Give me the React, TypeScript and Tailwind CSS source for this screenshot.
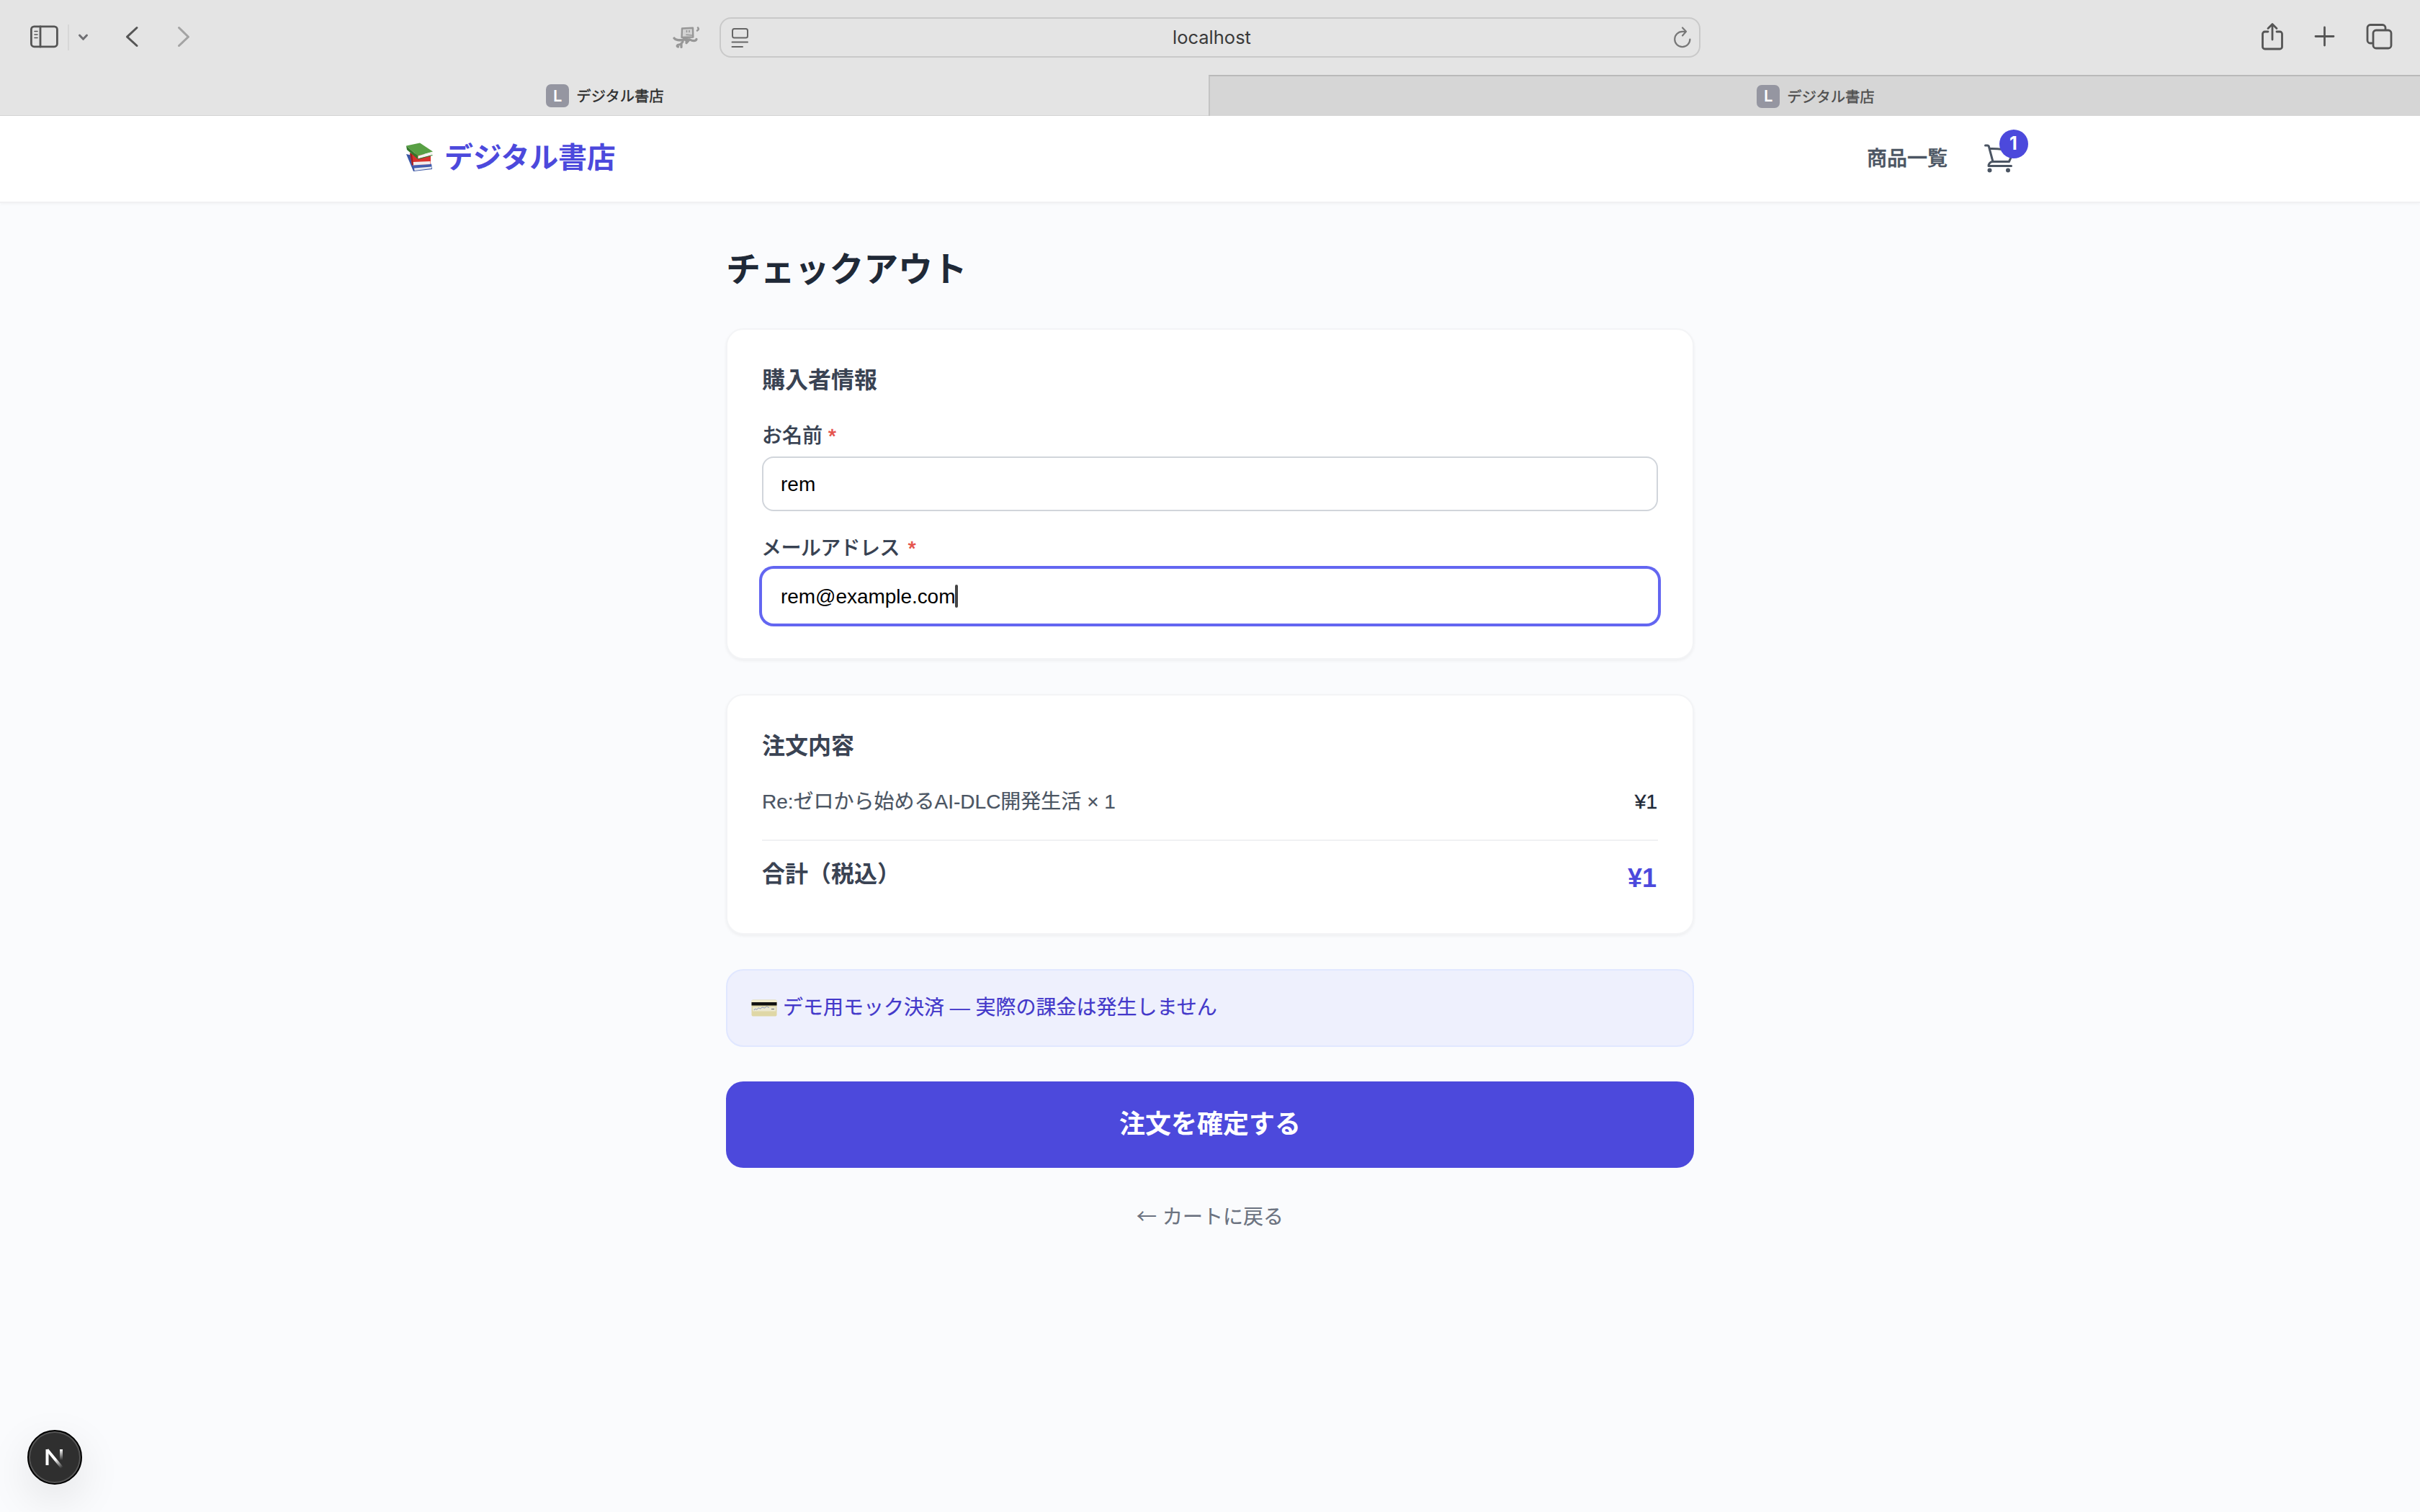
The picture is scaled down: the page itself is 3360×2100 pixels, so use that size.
import React from "react";

const JP = "font-['Liberation_Sans','Noto_Sans_CJK_JP',sans-serif]";

function Chrome() {
  return (
    <div className="flex h-[161px] flex-col bg-[#e4e4e4]">
      <div className="flex h-[104px] items-start">
        <div className="flex w-[999px] shrink-0 justify-between">
          <svg className="h-[104px] w-[280px] shrink-0" viewBox="0 0 280 104" fill="none" strokeLinecap="round" strokeLinejoin="round">
            <g stroke="#555" strokeWidth="2.8">
              <rect x="43.4" y="36.8" width="36" height="28" rx="4" />
              <path d="M56 37v28" />
              <path d="M48 43.5h4M48 48h4M48 52.5h4" strokeWidth="1.6" />
              <path d="M190 38.500l-13.500 12.700 13.500 12.300" strokeWidth="3" />
            </g>
            <path d="M95 34v36" stroke="#d3d3d3" strokeWidth="1.6" strokeLinecap="butt" />
            <path d="M110.500 49l5 5.300 5-5.300" stroke="#707074" strokeWidth="3" />
            <path d="M248.500 38.500l13 12.700-13 12.300" stroke="#a3a3a3" strokeWidth="3" />
          </svg>
          <svg className="mt-[34px] mr-[25px] h-[36px] w-[40px] shrink-0" viewBox="0 0 40 36" fill="none" stroke="#979797" strokeLinecap="round" strokeLinejoin="round">
            <path d="M13 5.500l15-.8.300 12.800-15.800.500z" fill="#d2d2d2" strokeWidth="2.400" />
            <path d="M19.500 8.500v2M23 8.500v2M19 14.300l8 .7" strokeWidth="1.600" />
            <path d="M2 19c2.500 3.500 7 3 13 2.500M24 21c3 2 8 2.500 9-.5" strokeWidth="3.200" />
            <path d="M15 20.500l8 .5-4 4.500" strokeWidth="3.400" fill="#979797" />
            <path d="M14 24l-3 3.500-4 1c-1.500 1-1 2 .5 2.500M12 27v4.500" strokeWidth="3.200" />
            <path d="M35 4.500c1.200 1.500 1.200 2.500-1 4" strokeWidth="2.600" />
          </svg>
        </div>
        <div className="mt-6 flex h-14 w-[1362px] shrink-0 items-center rounded-[16px] border-2 border-[#c9c9c9] pr-[9px] pl-[14px]">
          <svg className="h-8 w-7 shrink-0" viewBox="0 0 28 32" fill="none" stroke="#666" strokeWidth="2" strokeLinecap="round">
            <rect x="2" y="4" width="21" height="12.500" rx="2.500" />
            <path d="M1.500 22.500h21.500M1.500 29h14.500" />
          </svg>
          <div className="flex-1 text-center font-['Inter'] text-[25.500px] text-[#3a3a3a]">localhost</div>
          <svg className="h-8 w-7 shrink-0" viewBox="0 0 28 32" fill="none" stroke="#777" strokeWidth="2.200" strokeLinecap="round" strokeLinejoin="round">
            <path d="M24.400 18.500a10.600 10.600 0 1 1-10.600-10.600h4.500" />
            <path d="M14 2.500l5 5.300-5 5.600" />
          </svg>
        </div>
        <div className="flex-1" />
        <svg className="h-[104px] w-[226px] shrink-0" viewBox="3134 0 226 104" fill="none" stroke="#555" strokeWidth="2.800" strokeLinecap="round" strokeLinejoin="round">
          <path d="M3149 44h-4.500a3 3 0 0 0-3 3v18a3 3 0 0 0 3 3h21a3 3 0 0 0 3-3V47a3 3 0 0 0-3-3h-4.500M3155 55V34M3149 39.500l6-6 6 6" />
          <path d="M3215 50.500h25M3227.500 38v25" />
          <path d="M3293 60h-2a4 4 0 0 1-4-4V38.500a4 4 0 0 1 4-4h17a4 4 0 0 1 4 4v2" />
          <rect x="3295" y="42" width="25" height="25" rx="4" />
        </svg>
      </div>
      <div className="flex h-[57px]">
        <Tab active />
        <Tab />
      </div>
    </div>
  );
}

function Tab({ active = false }: { active?: boolean }) {
  return (
    <div
      className={
        active
          ? "flex w-[1678px] items-center justify-center gap-[10px] border-b border-[#d4d4d4] pt-[2px] pl-[2px] text-[#2b2b2b]"
          : "flex flex-1 items-center justify-center gap-[10px] border-t-2 border-l-2 border-t-[#b9b9b9] border-l-[#c4c4c4] bg-[#d6d6d6] pl-[2px] text-[#4d4d4d]"
      }
    >
      <span className="flex size-8 items-center justify-center rounded-[7px] bg-[#9596a1] font-['Inter'] text-[22px] font-semibold text-white">L</span>
      <span className={`${JP} pt-[2px] text-[20.300px] leading-[30px] [-webkit-text-stroke:0.4px]`}>デジタル書店</span>
    </div>
  );
}

function Books() {
  return (
    <svg className="h-[42px] w-[40px] shrink-0" viewBox="0 0 40 42">
      <path d="M1 16l10 24 26-3-1-7-26-12z" fill="#3b56a5" />
      <path d="M12 35.500l24-2v2.500l-23.500 3z" fill="#e6e9f0" />
      <path d="M9 31.500l26-2.500 1.500 2.500-25 3z" fill="#4562b5" />
      <path d="M6 15l3 16.500 26-1.500v-13z" fill="#d8322c" />
      <path d="M10.500 27l24-1v4l-24 1.500z" fill="#f1eeee" />
      <path d="M6 14l3.500 17.500 1.500-.5-2-15z" fill="#9d1d1f" />
      <path d="M1 4.500L20 .5l18 12-21 6z" fill="#58a044" />
      <path d="M1 4.500l16 14v4.500L2 10z" fill="#34772b" />
      <path d="M17.500 18.500l20-5.500-.5 4.500-19.500 5z" fill="#f3f3ef" />
      <path d="M17 22.500l20.500-5.500v1l-20 5.500z" fill="#34772b" />
    </svg>
  );
}

function CardIcon() {
  return (
    <svg className="h-[24px] w-[36px] shrink-0" viewBox="0 0 36 24">
      <rect x=".5" y=".5" width="35" height="23" rx="2" fill="#dfd7a6" />
      <rect x=".5" y="1" width="35" height="3.500" fill="#f0ebcb" />
      <rect x=".5" y="4" width="35" height="4.500" fill="#111" />
      <rect x="2" y="10.500" width="32" height="6" fill="#ebe8d0" />
      <path d="M4 15c2-4 3 1 5-2s3 2 5-1 4 2 6-1 3 1 5 0" stroke="#8290bd" strokeWidth="1" fill="none" />
      <path d="M28 13.500h4" stroke="#777" strokeWidth="1.200" />
    </svg>
  );
}

function Header() {
  return (
    <header className="flex h-[121px] items-center justify-between border-b-2 border-[#f1f1f3] bg-white px-[560px] shadow-[0_2px_4px_rgba(0,0,0,0.03)]">
      <div className="flex items-center gap-[14px] pl-[3px] text-[40px] leading-[56px] font-bold text-[#4c49dc]">
        <span className="pb-[3px]"><Books /></span>
        <span className="pb-[3px] tracking-[-0.3px]">デジタル書店</span>
      </div>
      <nav className="flex items-center gap-[48px]">
        <span className="text-[28px] font-medium text-[#4b5563] [-webkit-text-stroke:0.5px]">商品一覧</span>
        <div className="relative h-12 w-12">
          <svg className="absolute top-[-1px] left-0 size-[48px]" viewBox="0 0 24 24" fill="none" stroke="#4b5563" strokeWidth="1.500" strokeLinecap="round" strokeLinejoin="round">
            <path d="M2.250 3h1.386c.51 0 .955.343 1.087.835l.383 1.437M7.500 14.250a3 3 0 0 0-3 3h15.750m-12.750-3h11.218c1.121-2.300 2.100-4.684 2.924-7.138a60.114 60.114 0 0 0-16.536-1.840M7.500 14.250 5.106 5.272M6 20.250a.75.75 0 1 1-1.500 0 .75.75 0 0 1 1.500 0Zm12.750 0a.75.75 0 1 1-1.500 0 .75.75 0 0 1 1.500 0Z" />
          </svg>
          <span className="absolute -top-[17px] left-[24px] flex size-10 items-center justify-center rounded-full bg-[#4c49dc] pr-px font-['Inter'] text-[25px] font-bold text-white">1</span>
        </div>
      </nav>
    </header>
  );
}

function Panel({ className, children }: { className: string; children: React.ReactNode }) {
  return (
    <section className={`rounded-[24px] border-2 border-[#f3f4f6] bg-white px-12 shadow-[0_2px_4px_rgba(0,0,0,0.05)] ${className}`}>
      {children}
    </section>
  );
}

function Label({ children }: { children: React.ReactNode }) {
  return (
    <div className="flex h-[40px] items-center text-[28px] leading-[40px] font-medium text-[#374151]">
      <span className="[-webkit-text-stroke:0.200px]">{children}</span>
      <span className="text-[#e5534b] [-webkit-text-stroke:0.700px]">*</span>
    </div>
  );
}

export default function App() {
  return (
    <div className={`flex h-[2100px] w-[3360px] flex-col overflow-hidden bg-[#fafbfd] ${JP}`}>
      <Chrome />
      <Header />
      <main className="mx-auto w-[1344px] flex-1 pt-[61px]">
        <h1 className="h-[64px] text-[48px] leading-[64px] font-bold tracking-[-0.2px] text-[#1f2937]">チェックアウト</h1>
        <Panel className="mt-[49px] h-[460px] pt-[46px]">
          <h2 className="text-[32px] leading-[48px] font-bold text-[#3a4353]">購入者情報</h2>
          <div className="mt-[34px]">
            <Label><span className="mr-[8px]">お名前</span></Label>
          </div>
          <div className="mt-[8px] flex h-[76px] items-center rounded-[16px] border-2 border-[#d1d5db] px-[24px] text-[28px] text-black"><span className="pt-[2px]">rem</span></div>
          <div className="mt-[32px]">
            <Label><span className="mr-[12px] -ml-px tracking-[-0.600px]">メールアドレス</span></Label>
          </div>
          <div className="mt-[8px] flex h-[76px] items-center rounded-[16px] border-2 border-transparent px-[24px] text-[28px] text-black ring-4 ring-[#6366f1]">
            <span className="pt-[2px] tracking-[-0.050px]">rem@example.com</span>
            <span className="h-8 w-[4px] rounded-full bg-[#444]" />
          </div>
        </Panel>
        <Panel className="mt-[48px] h-[334px] pt-[46px]">
          <h2 className="text-[32px] leading-[48px] font-bold text-[#3a4353]">注文内容</h2>
          <div className="mt-[34px] flex h-[40px] items-center justify-between text-[28px]">
            <span className="text-[#4b5563] [-webkit-text-stroke:0.200px]">Re:ゼロから始めるAI-DLC開発生活 × 1</span>
            <span className="pr-[1px] font-medium text-[#1f2937] [-webkit-text-stroke:0.4px]">¥1</span>
          </div>
          <div className="mt-[32px] flex justify-between border-t-2 border-[#f0f1f3] pt-[22px] font-bold">
            <span className="text-[32px] leading-[48px] text-[#3a4353]">合計（税込）</span>
            <span className="pt-[2px] pr-[2px] text-[36px] leading-[56px] text-[#4c49dc]">¥1</span>
          </div>
        </Panel>
        <div className="mt-[48px] flex h-[108px] items-center gap-[8px] rounded-[24px] border-2 border-[#e0e7ff] bg-[#eef0fd] pr-8 pl-[33px] text-[28px] text-[#4338ca]">
          <CardIcon />
          <span className="[-webkit-text-stroke:0.200px]">デモ用モック決済 — 実際の課金は発生しません</span>
        </div>
        <button className="mt-[48px] flex h-[120px] w-full items-center justify-center rounded-[24px] bg-[#4c49dc] text-[36px] font-bold text-white">
          注文を確定する
        </button>
        <div className="mt-[46px] text-center text-[28px] leading-[40px] text-[#6b7280] [-webkit-text-stroke:0.200px]">
          <span className="font-['Noto_Sans_CJK_JP',sans-serif]">←</span> カートに戻る
        </div>
      </main>
      <div className="absolute top-[1986px] left-[38px] flex size-[76px] items-center justify-center rounded-full border-2 border-black bg-[#2f2f2f] shadow-[inset_0_0_0_2px_#555,0_20px_60px_rgba(0,0,0,0.1)]">
        <svg className="size-[40px]" viewBox="0 0 40 40" fill="none">
          <defs>
            <linearGradient id="diag" x1="22" y1="22" x2="31" y2="34" gradientUnits="userSpaceOnUse">
              <stop stopColor="#fff" />
              <stop offset="1" stopColor="#fff" stopOpacity="0" />
            </linearGradient>
            <linearGradient id="stem" x1="28" y1="9" x2="28" y2="24" gradientUnits="userSpaceOnUse">
              <stop stopColor="#fff" />
              <stop offset="1" stopColor="#fff" stopOpacity="0" />
            </linearGradient>
          </defs>
          <path d="M9.500 31V9" stroke="#fff" strokeWidth="4" />
          <path d="M9.500 9.500L30.500 35" stroke="url(#diag)" strokeWidth="4" />
          <path d="M29 9v15" stroke="url(#stem)" strokeWidth="4" />
        </svg>
      </div>
    </div>
  );
}
